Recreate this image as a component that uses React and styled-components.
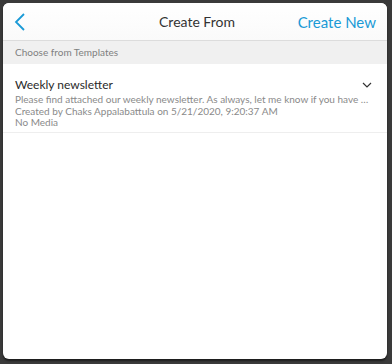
import React from 'react';
import styled, { createGlobalStyle } from 'styled-components';

const Global = createGlobalStyle`
	html, body {
		margin: 0;
		padding: 0;
		background: #3b3b3b;
		font-family: Lato, "Open Sans", sans-serif;
	}
`;

const Screen = styled.div`
	width: 392px;
	height: 364px;
	padding: 3px 5px 5px 3px;
	box-sizing: border-box;
	background: #3a3a3a;
`;

const Modal = styled.div`
	height: 356px;
	background: #fff;
	border-radius: 6px;
	overflow: hidden;
	box-shadow: 0 2px 2px rgba(0, 0, 0, 0.5);
	display: flex;
	flex-direction: column;
`;

const Header = styled.div`
	height: 37px;
	display: grid;
	grid-template-columns: 90px 1fr 90px;
	align-items: center;
	border-bottom: 1px solid #dcdcdc;
	background: linear-gradient(#fff, #fafafa);
`;

const BackButton = styled.button`
	border: none;
	background: none;
	padding: 0 0 0 11px;
	display: flex;
	align-items: center;
	color: #1a9ad6;
	cursor: pointer;
`;

const Title = styled.div`
	text-align: center;
	font-size: 14px;
	color: #333;
	padding-left: 4px;
`;

const Action = styled.div`
	text-align: right;
	padding-right: 11px;
	font-size: 15px;
	color: #1a9ad6;
	white-space: nowrap;
`;

const Section = styled.div`
	height: 23px;
	line-height: 23px;
	background: #f0f0f0;
	padding-left: 12px;
	font-size: 10px;
	color: #808080;
`;

const Item = styled.div`
	padding: 12px 10px 3px 12px;
	border-bottom: 1px solid #eeeeee;
	position: relative;
`;

const ItemTitle = styled.div`
	font-size: 12px;
	color: #2a2a2a;
	line-height: 17px;
	margin-bottom: 1px;
`;

const Line = styled.div`
	font-size: 10px;
	color: #8a8a8a;
	line-height: 11.5px;
	white-space: nowrap;
	overflow: hidden;
	text-overflow: ellipsis;
	padding-right: 6px;
`;

const Toggle = styled.span`
	position: absolute;
	right: 15px;
	top: 18px;
	color: #333;
	display: flex;
`;

export default function App() {
	return (
		<Screen>
			<Global />
			<Modal>
				<Header>
					<BackButton>
						<svg width="12" height="18" viewBox="0 0 12 18">
							<path d="M10 1 L2 9 L10 17" fill="none" stroke="currentColor" strokeWidth="1.8" />
						</svg>
					</BackButton>
					<Title>Create From</Title>
					<Action>Create New</Action>
				</Header>
				<Section>Choose from Templates</Section>
				<Item>
					<ItemTitle>Weekly newsletter</ItemTitle>
					<Line>Please find attached our weekly newsletter. As always, let me know if you have any questions.</Line>
					<Line>Created by Chaks Appalabattula on 5/21/2020, 9:20:37 AM</Line>
					<Line>No Media</Line>
					<Toggle>
						<svg width="10" height="6" viewBox="0 0 10 6">
							<path d="M1 1 L5 5 L9 1" fill="none" stroke="currentColor" strokeWidth="1.2" />
						</svg>
					</Toggle>
				</Item>
			</Modal>
		</Screen>
	);
}
